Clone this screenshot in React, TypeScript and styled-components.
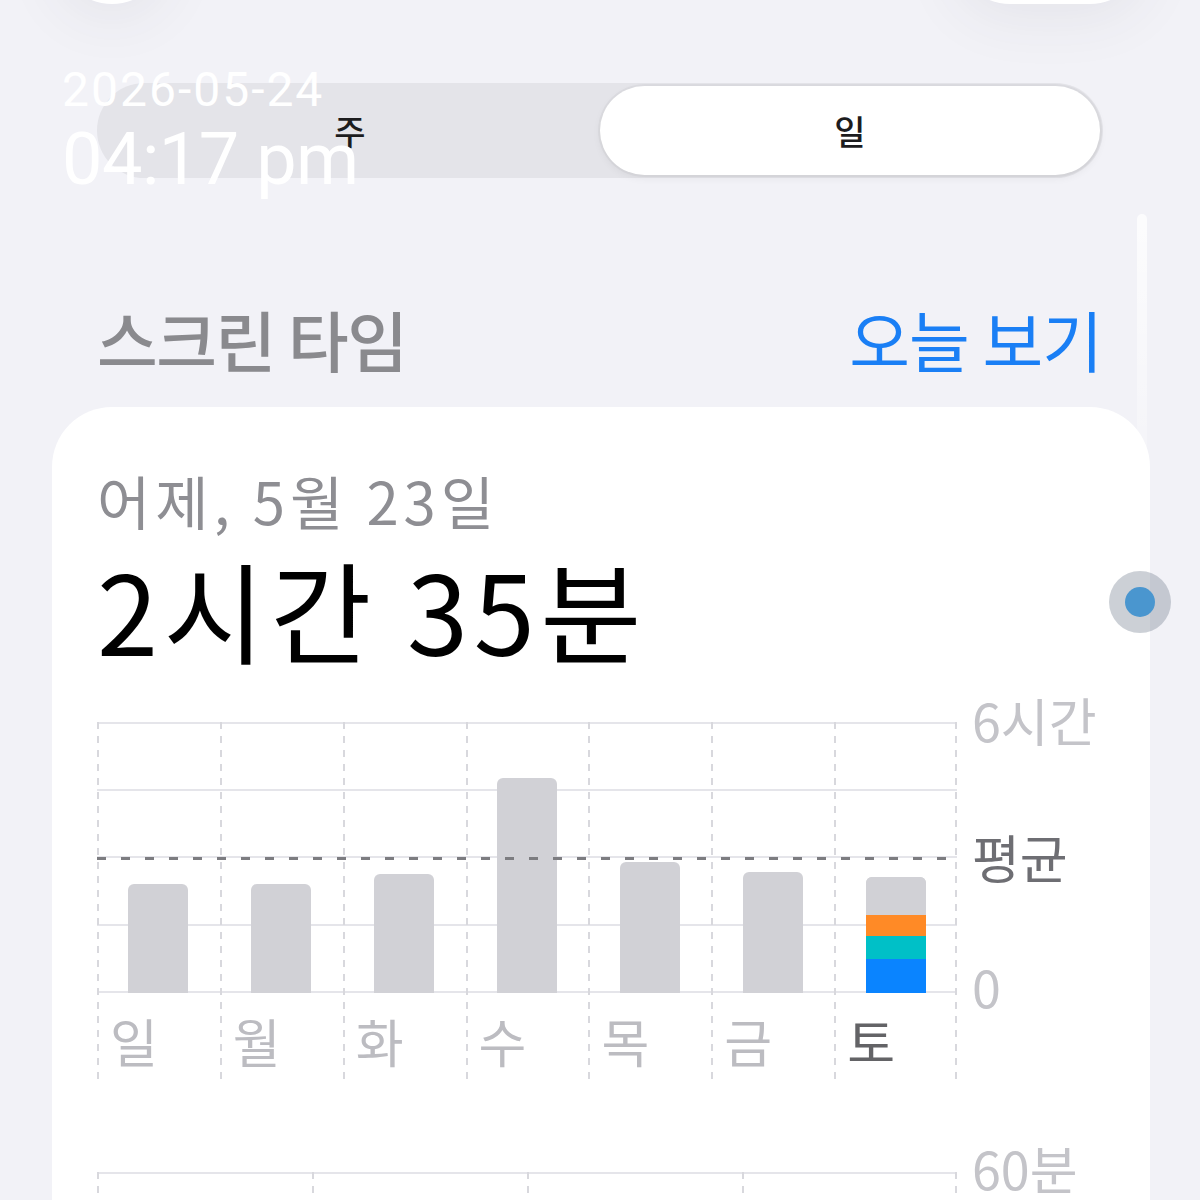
import styled, { createGlobalStyle } from 'styled-components';
import { FC } from 'react';

const GlobalStyle = createGlobalStyle`
    html, body {
        margin: 0;
        padding: 0;
        background: #f2f2f7;
    }
`;

const Page = styled.div`
    position: relative;
    width: 1200px;
    height: 1200px;
    overflow: hidden;
    background: #f2f2f7;
    font-family: 'Noto Sans CJK KR', 'Noto Sans', sans-serif;
    color: #1c1c1e;
`;

const GlassButton = styled.div<{ $left: number; $width: number }>`
    position: absolute;
    top: -106px;
    left: ${(p) => p.$left}px;
    width: ${(p) => p.$width}px;
    height: 110px;
    border-radius: 55px;
    background: #fff;
    box-shadow: 0 12px 60px rgba(60, 60, 80, 0.08);
`;

const Watermark = styled.div`
    position: absolute;
    left: 62px;
    top: 66px;
    color: #fff;
    font-family: Roboto, 'Liberation Sans', sans-serif;
    font-weight: 400;
    line-height: 1;
    pointer-events: none;
    z-index: 2;

    .date {
        font-size: 48px;
        letter-spacing: 2px;
    }
    .time {
        margin-top: 10px;
        font-size: 72px;
        letter-spacing: -0.5px;
    }
`;

const Segmented = styled.div`
    margin: 83px 0 0 97px;
    width: 1006px;
    height: 95px;
    box-sizing: border-box;
    padding: 3px;
    border-radius: 48px;
    background: #e4e4e9;
    display: grid;
    grid-template-columns: 1fr 1fr;
`;

const Segment = styled.div<{ $active?: boolean }>`
    display: flex;
    align-items: center;
    justify-content: center;
    border-radius: 45px;
    font-size: 34px;
    font-weight: 500;
    color: #1c1c1e;
    background: ${(p) => (p.$active ? '#fff' : 'transparent')};
    box-shadow: ${(p) => (p.$active ? '0 0 0 2px rgba(0,0,0,0.03), 0 3px 8px rgba(0,0,0,0.06)' : 'none')};
`;

const SectionHeader = styled.div`
    margin: 127px 98px 0 97px;
    display: flex;
    justify-content: space-between;
    align-items: center;
    font-size: 66px;
    line-height: 1;
`;

const SectionTitle = styled.div`
    color: #8a8a8e;
    font-weight: 500;
    letter-spacing: -1.5px;
`;

const SectionLink = styled.div`
    color: #1a7ff5;
    font-weight: 400;
    letter-spacing: -1px;
`;

const ScrollTrack = styled.div`
    position: absolute;
    left: 1137px;
    top: 214px;
    width: 10px;
    height: 240px;
    border-radius: 5px;
    background: linear-gradient(to bottom, rgba(255, 255, 255, 0.8), rgba(255, 255, 255, 0.2));
`;

const Card = styled.div`
    margin: 36px 0 0 52px;
    width: 1098px;
    min-height: 900px;
    box-sizing: border-box;
    padding: 64px 0 0 45px;
    border-radius: 60px 60px 0 0;
    background: #fff;
`;

const DateLabel = styled.div`
    font-size: 58px;
    line-height: 1;
    color: #8e8e93;
    letter-spacing: 5px;
`;

const Total = styled.div`
    margin-top: 24px;
    font-size: 110px;
    line-height: 1;
    font-weight: 400;
    color: #000;
    letter-spacing: 5.5px;
`;

const ChartRow = styled.div<{ $top: number }>`
    margin-top: ${(p) => p.$top}px;
    display: flex;
    gap: 15px;
`;

const Columns = styled.div<{ $cols: number; $plot: number }>`
    position: relative;
    width: 860px;
    display: grid;
    grid-template-columns: repeat(${(p) => p.$cols}, 1fr);
    background-image: repeating-linear-gradient(
        to bottom,
        #e5e5ea 0 2px,
        transparent 2px 67.25px
    );
    background-size: 100% ${(p) => p.$plot}px;
    background-repeat: no-repeat;
`;

const dashV = `repeating-linear-gradient(to bottom, #d8d8dd 0 7px, transparent 7px 14px)`;

const Column = styled.div<{ $last?: boolean }>`
    display: flex;
    flex-direction: column;
    background-image: ${dashV}${(p) => (p.$last ? `, ${dashV}` : '')};
    background-size: 2px 100%${(p) => (p.$last ? ', 2px 100%' : '')};
    background-position: left top${(p) => (p.$last ? ', right top' : '')};
    background-repeat: no-repeat;
`;

const BarSlot = styled.div`
    height: 271px;
    display: flex;
    align-items: flex-end;
    justify-content: center;
`;

const Bar = styled.div`
    width: 60px;
    border-radius: 6px 6px 0 0;
    overflow: hidden;
    display: flex;
    flex-direction: column;
    background: #d1d1d6;
`;

const Segm = styled.div<{ $color: string }>`
    background: ${(p) => p.$color};
`;

const DayLabel = styled.div<{ $today?: boolean }>`
    height: 86px;
    box-sizing: border-box;
    padding: 22px 0 0 13px;
    font-size: 52px;
    line-height: 1;
    color: ${(p) => (p.$today ? '#636366' : '#bcbcc1')};
`;

const AvgLine = styled.div`
    position: absolute;
    left: 0;
    right: 0;
    top: 135px;
    height: 3px;
    background: repeating-linear-gradient(to right, #7c7c80 0 9px, transparent 9px 24px);
`;

const YAxis = styled.div`
    display: flex;
    flex-direction: column;
`;

const YLabel = styled.div<{ $top: number; $strong?: boolean }>`
    margin-top: ${(p) => p.$top}px;
    font-size: 52px;
    line-height: 1;
    color: ${(p) => (p.$strong ? '#6e6e73' : '#c4c4c9')};
    white-space: nowrap;
`;

const Pin = styled.div`
    position: absolute;
    left: 1109px;
    top: 571px;
    width: 62px;
    height: 62px;
    border-radius: 50%;
    background: rgba(120, 132, 148, 0.38);
    display: flex;
    align-items: center;
    justify-content: center;

    &::after {
        content: '';
        width: 30px;
        height: 30px;
        border-radius: 50%;
        background: #4a96cf;
    }
`;

type Day = { label: string; height: number; today?: boolean };

const days: Day[] = [
    { label: '일', height: 109 },
    { label: '월', height: 109 },
    { label: '화', height: 119 },
    { label: '수', height: 215 },
    { label: '목', height: 131 },
    { label: '금', height: 121 },
    { label: '토', height: 116, today: true },
];

const todaySegments = [
    { color: '#d1d1d6', size: 38 },
    { color: '#ff8a26', size: 21 },
    { color: '#00c0c7', size: 23 },
    { color: '#0a84ff', size: 34 },
];

const App: FC = () => {
    return (
        <Page>
            <GlobalStyle />
            <GlassButton $left={57} $width={110} />
            <GlassButton $left={955} $width={190} />
            <Watermark>
                <div className="date">2026-05-24</div>
                <div className="time">04:17 pm</div>
            </Watermark>

            <Segmented>
                <Segment>주</Segment>
                <Segment $active>일</Segment>
            </Segmented>

            <SectionHeader>
                <SectionTitle>스크린 타임</SectionTitle>
                <SectionLink>오늘 보기</SectionLink>
            </SectionHeader>
            <ScrollTrack />

            <Card>
                <DateLabel>어제, 5월 23일</DateLabel>
                <Total>2시간 35분</Total>

                <ChartRow $top={59}>
                    <Columns $cols={7} $plot={271}>
                        {days.map((d, i) => (
                            <Column key={d.label} $last={i === days.length - 1}>
                                <BarSlot>
                                    <Bar style={{ height: d.height }}>
                                        {d.today &&
                                            todaySegments.map((s) => (
                                                <Segm
                                                    key={s.color}
                                                    $color={s.color}
                                                    style={{ height: s.size }}
                                                />
                                            ))}
                                    </Bar>
                                </BarSlot>
                                <DayLabel $today={d.today}>{d.label}</DayLabel>
                            </Column>
                        ))}
                        <AvgLine />
                    </Columns>
                    <YAxis>
                        <YLabel $top={-28}>6시간</YLabel>
                        <YLabel $top={85} $strong>
                            평균
                        </YLabel>
                        <YLabel $top={77}>0</YLabel>
                    </YAxis>
                </ChartRow>

                <ChartRow $top={93}>
                    <Columns $cols={4} $plot={271}>
                        {[0, 1, 2, 3].map((i) => (
                            <Column key={i} $last={i === 3}>
                                <BarSlot />
                            </Column>
                        ))}
                    </Columns>
                    <YAxis>
                        <YLabel $top={-30}>60분</YLabel>
                    </YAxis>
                </ChartRow>
            </Card>
            <Pin />
        </Page>
    );
};

export default App;
